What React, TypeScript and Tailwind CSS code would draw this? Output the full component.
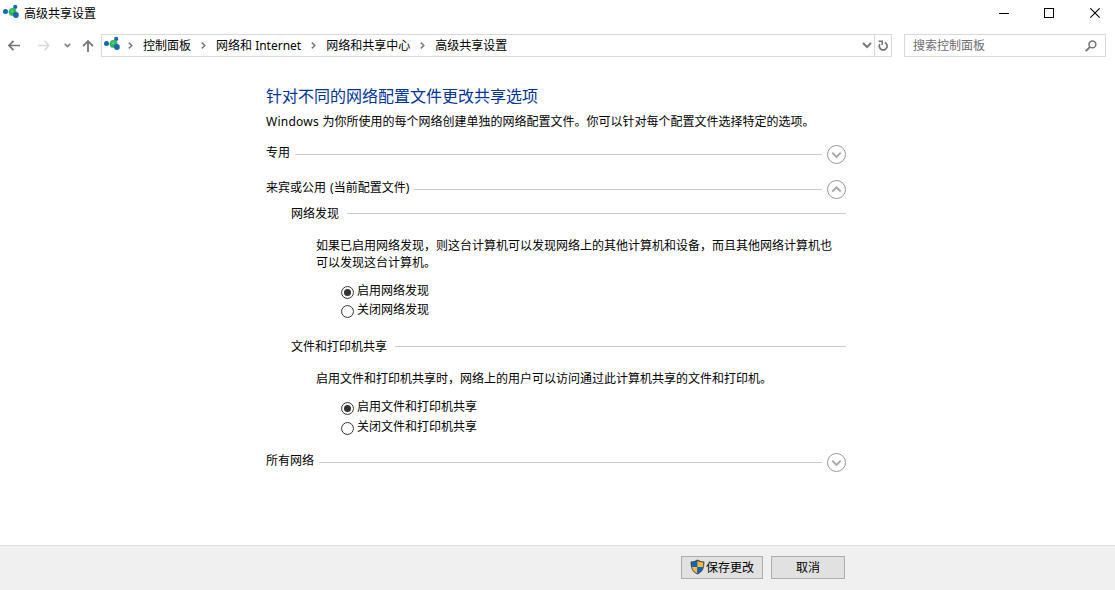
import { useState } from 'react'

interface RadioOptionProps {
    name: string
    label: string
    checked: boolean
    onSelect: () => void
    className?: string
}

interface SectionHeaderProps {
    title: string
    open?: boolean
    className?: string
}

function NetworkIcon({ className = '' }: { className?: string }) {
    return (
        <svg width="17" height="15" viewBox="0 0 17 15" className={`flex-shrink-0 ${className}`}>
            <path d="M2.5 7.6 L9.8 8 L12.2 2.9 M9.8 8 L12.9 11" stroke="#c4dbe8" strokeWidth="1" fill="none" />
            <circle cx="2.5" cy="7.6" r="2.5" fill="#1767b1" />
            <circle cx="12.2" cy="2.9" r="2.1" fill="#1767b1" />
            <circle cx="9.6" cy="7.9" r="3.9" fill="#2fb457" />
            <circle cx="9" cy="7" r="1.8" fill="#4cc86e" />
            <circle cx="12.9" cy="11" r="2.9" fill="#1767b1" />
        </svg>
    )
}

function ShieldIcon() {
    return (
        <svg width="15" height="16" viewBox="0 0 15 16" className="-mt-px flex-shrink-0">
            <path d="M7.5 0.4 C9.5 1.7 11.7 2.3 14.4 2.4 C14.6 8.5 12.9 12.9 7.5 15.6 C2.1 12.9 0.4 8.5 0.6 2.4 C3.3 2.3 5.5 1.7 7.5 0.4 Z" fill="#4b4f55" />
            <path d="M7.4 1.9 C5.7 2.8 4 3.3 1.8 3.4 L1.9 8 L7.4 8 Z" fill="#0b64c4" />
            <path d="M7.4 1.9 C9.2 2.9 11 3.3 13.2 3.4 L13.1 8 L7.4 8 Z" fill="#fdbb36" />
            <path d="M1.9 8 C2.5 11 4.3 13.1 7.4 14.5 L7.4 8 Z" fill="#fdbb36" />
            <path d="M13.1 8 C12.5 11 10.7 13.1 7.4 14.5 L7.4 8 Z" fill="#0b64c4" />
        </svg>
    )
}

function CrumbArrow() {
    return (
        <svg width="5" height="7" viewBox="0 0 5 7" className="flex-shrink-0">
            <path d="M0.8 0.6 L3.8 3.5 L0.8 6.4" stroke="#7a7a7a" strokeWidth="1.5" fill="none" />
        </svg>
    )
}

function SectionHeader({ title, open = false, className = '' }: SectionHeaderProps) {
    return (
        <div className={`flex h-[19px] items-center ${className}`}>
            <span className="-mt-1 whitespace-nowrap [word-spacing:1px]">{title}</span>
            <div className="ml-[5px] h-px flex-1 bg-[#cbcbcb]" />
            <svg width="19" height="19" viewBox="0 0 19 19" className="ml-[5px] flex-shrink-0">
                <circle cx="9.5" cy="9.5" r="9" stroke="#999" strokeWidth="1" fill="none" />
                <path
                    d={open ? 'M5.3 11.5 L9.5 7.3 L13.7 11.5' : 'M5.3 7.7 L9.5 11.9 L13.7 7.7'}
                    stroke="#a6a6a6"
                    strokeWidth="1.8"
                    fill="none"
                />
            </svg>
        </div>
    )
}

function SubHeader({ title, className = '' }: { title: string; className?: string }) {
    return (
        <div className={`ml-[25px] flex h-[18px] items-center ${className}`}>
            <span className="whitespace-nowrap">{title}</span>
            <div className="ml-2 h-px flex-1 bg-[#cbcbcb]" />
        </div>
    )
}

function RadioOption({ name, label, checked, onSelect, className = '' }: RadioOptionProps) {
    return (
        <label className={`ml-[75px] flex items-center ${className}`}>
            <input type="radio" name={name} checked={checked} onChange={onSelect} className="sr-only" />
            <svg width="13" height="13" viewBox="0 0 13 13" className="mt-[2px] flex-shrink-0">
                <circle cx="6.5" cy="6.5" r="5.95" stroke="#333" strokeWidth="1" fill="#fff" />
                {checked && <circle cx="6.5" cy="6.5" r="3.5" fill="#333" />}
            </svg>
            <span className="ml-[3px] -mt-[2px] whitespace-nowrap">{label}</span>
        </label>
    )
}

export default function App() {
    const [discovery, setDiscovery] = useState(true)
    const [sharing, setSharing] = useState(true)

    return (
        <div className="relative flex h-[590px] w-[1115px] flex-col overflow-hidden bg-white font-['Noto_Sans','Noto_Sans_CJK_SC',sans-serif] text-[12px] leading-[17px] text-black">

            {/* Title bar */}
            <div className="flex h-[27px] items-center">
                <NetworkIcon className="ml-[3px] -mt-1" />
                <span className="ml-1">高级共享设置</span>
                <div className="ml-auto mr-[15px] flex items-center gap-[35px]">
                    <svg width="10" height="11" viewBox="0 0 10 11" shapeRendering="crispEdges">
                        <path d="M0 5.5 H10" stroke="#000" />
                    </svg>
                    <svg width="11" height="11" viewBox="0 0 11 11" shapeRendering="crispEdges">
                        <rect x="0.5" y="0.5" width="9" height="9" stroke="#000" fill="none" />
                    </svg>
                    <svg width="10" height="11" viewBox="0 0 10 11">
                        <path d="M0.3 0.3 L9.7 9.7 M9.7 0.3 L0.3 9.7" stroke="#000" strokeWidth="1.1" />
                    </svg>
                </div>
            </div>

            {/* Address bar */}
            <div className="mt-[7px] flex h-[23px] items-center">
                <svg width="12" height="11" viewBox="0 0 12 11" className="ml-2">
                    <path d="M5.5 0.8 L1 5.5 L5.5 10.2 M1 5.5 H12" stroke="#757575" strokeWidth="1.7" fill="none" />
                </svg>
                <svg width="12" height="11" viewBox="0 0 12 11" className="ml-[18px]">
                    <path d="M6.5 0.8 L11 5.5 L6.5 10.2 M11 5.5 H0" stroke="#d9d9d9" strokeWidth="1.6" fill="none" />
                </svg>
                <svg width="7" height="5" viewBox="0 0 7 5" className="ml-[14px]">
                    <path d="M0.7 0.8 L3.5 3.6 L6.3 0.8" stroke="#7a7a7a" strokeWidth="1.5" fill="none" />
                </svg>
                <svg width="12" height="12" viewBox="0 0 12 12" className="ml-[11px]">
                    <path d="M1 6.2 L6 1.2 L11 6.2 M6 1.2 V12" stroke="#757575" strokeWidth="1.8" fill="none" />
                </svg>

                <div className="ml-[7px] flex h-[23px] w-[791px] items-center border border-[#d9d9d9]">
                    <NetworkIcon className="ml-[2px] -mt-1" />
                    <div className="ml-[7px] flex items-center whitespace-nowrap">
                        <CrumbArrow />
                        <span className="ml-[10px] mr-[10px] -mt-px">控制面板</span>
                        <CrumbArrow />
                        <span className="ml-[10px] mr-[10px] -mt-px">网络和 Internet</span>
                        <CrumbArrow />
                        <span className="ml-[10px] mr-[10px] -mt-px">网络和共享中心</span>
                        <CrumbArrow />
                        <span className="ml-[10px] -mt-px">高级共享设置</span>
                    </div>
                    <svg width="10" height="7" viewBox="0 0 10 7" className="ml-auto mr-[2px]">
                        <path d="M1 1 L5 5 L9 1" stroke="#7a7a7a" strokeWidth="2" fill="none" />
                    </svg>
                    <div className="flex h-full w-[17px] items-center justify-center border-l border-[#d9d9d9]">
                        <svg width="10" height="11" viewBox="0 0 10 11">
                            <path d="M7 2.6 A3.9 3.9 0 1 1 1.9 4" stroke="#757575" strokeWidth="1.7" fill="none" />
                            <path d="M0.6 1.2 H4.2 V5" stroke="#757575" strokeWidth="1.6" fill="none" />
                        </svg>
                    </div>
                </div>

                <div className="ml-3 flex h-[23px] w-[202px] items-center border border-[#d9d9d9]">
                    <span className="ml-2 text-[#6d6d6d]">搜索控制面板</span>
                    <svg width="12" height="12" viewBox="0 0 12 12" className="ml-auto mr-2">
                        <circle cx="7.4" cy="4.4" r="3.4" stroke="#757575" strokeWidth="1.6" fill="none" />
                        <path d="M5 6.9 L0.8 11.1" stroke="#757575" strokeWidth="2" />
                    </svg>
                </div>
            </div>

            {/* Content */}
            <div className="ml-[266px] w-[580px]">
                <h1 className="mt-[29px] h-5 text-[16px] leading-5 text-[#003399]">针对不同的网络配置文件更改共享选项</h1>
                <p className="mt-[7px] h-[18px] whitespace-nowrap leading-[18px]">
                    <span className="tracking-[0.25px]">Windows </span>
                    为你所使用的每个网络创建单独的网络配置文件。你可以针对每个配置文件选择特定的选项。
                </p>

                <SectionHeader title="专用" className="mt-[14px]" />
                <SectionHeader title="来宾或公用 (当前配置文件)" open className="mt-4" />

                <SubHeader title="网络发现" className="mt-[5px]" />
                <p className="ml-[50px] mt-[15px] whitespace-nowrap">
                    如果已启用网络发现，则这台计算机可以发现网络上的其他计算机和设备，而且其他网络计算机也
                    <br />
                    可以发现这台计算机。
                </p>
                <div className="mt-[11px]">
                    <RadioOption name="discovery" label="启用网络发现" checked={discovery} onSelect={() => setDiscovery(true)} className="h-[19px]" />
                    <RadioOption name="discovery" label="关闭网络发现" checked={!discovery} onSelect={() => setDiscovery(false)} className="h-[19px]" />
                </div>

                <SubHeader title="文件和打印机共享" className="mt-[17px]" />
                <p className="ml-[50px] mt-[15px] whitespace-nowrap">
                    启用文件和打印机共享时，网络上的用户可以访问通过此计算机共享的文件和打印机。
                </p>
                <div className="mt-[10px]">
                    <RadioOption name="sharing" label="启用文件和打印机共享" checked={sharing} onSelect={() => setSharing(true)} className="h-5" />
                    <RadioOption name="sharing" label="关闭文件和打印机共享" checked={!sharing} onSelect={() => setSharing(false)} className="h-5" />
                </div>

                <SectionHeader title="所有网络" className="mt-4" />
            </div>

            {/* Footer */}
            <div className="mt-auto flex h-[45px] border-t border-[#dfdfdf] bg-[#f0f0f0] pt-[10px]">
                <button className="ml-[681px] flex h-[23px] w-[82px] items-center justify-center border border-[#adadad] bg-[#e1e1e1]">
                    <ShieldIcon />
                    <span className="ml-px">保存更改</span>
                </button>
                <button className="ml-2 flex h-[23px] w-[74px] items-center justify-center border border-[#adadad] bg-[#e1e1e1]">
                    取消
                </button>
            </div>
        </div>
    )
}
